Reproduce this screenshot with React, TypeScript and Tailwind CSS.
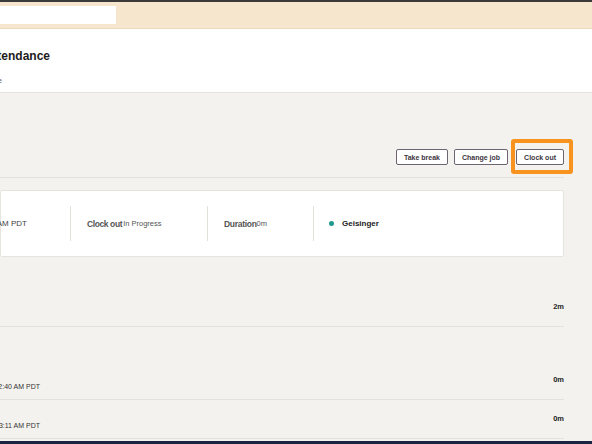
import React from "react";

// Attendance page, cropped view: clock-in card with shift actions and entry list

interface Entry {
  time: string;
  duration: string;
  height: string;
}

const entries: Entry[] = [
  { time: "", duration: "2m", height: "h-[70px]" },
  { time: "12:40 AM PDT", duration: "0m", height: "h-[73px]" },
  { time: "10:03:11 AM PDT", duration: "0m", height: "h-[39px]" },
];

function ActionButton({ label }: { label: string }) {
  return (
    <button className="h-[16px] px-[7px] border border-[#6f6572] rounded-[2px] bg-white text-[7px] font-bold leading-none text-[#3d3540] whitespace-nowrap">
      {label}
    </button>
  );
}

export default function App() {
  return (
    <div
      className="w-full h-[444px] overflow-hidden bg-[#f3f2ee] flex flex-col"
      style={{ fontFamily: '"Liberation Sans", Arial, sans-serif' }}
    >
      {/* Top edge */}
      <div className="h-[2px] bg-[#3b3b3b] shrink-0" />

      {/* Banner */}
      <div className="h-[27px] shrink-0 bg-[#f5e6cd] border-b border-[#eadbbf]">
        <div className="mt-[4px] h-[18px] w-[116px] bg-white" />
      </div>

      {/* Page header */}
      <div className="h-[64px] shrink-0 bg-white border-b border-[#e4e2dd]">
        <div className="pt-[19px] w-[50px] flex justify-end">
          <h1 className="text-[12px] leading-[16px] font-bold text-[#1c1c1c] whitespace-nowrap">
            Attendance
          </h1>
        </div>
        <div className="mt-[13px] w-[2px] flex justify-end">
          <span className="text-[7px] leading-[8px] text-[#555] whitespace-nowrap">Home</span>
        </div>
      </div>

      {/* Main */}
      <div className="pr-[28px] shrink-0">
        <div className="h-[85px] pt-[56px] border-b border-[#e4e2dd] flex justify-end items-start">
          <ActionButton label="Take break" />
          <div className="ml-[6px] flex">
            <ActionButton label="Change job" />
          </div>
          <div className="ml-[8px] relative flex">
            <ActionButton label="Clock out" />
            <span className="absolute left-[-5px] right-[-9px] top-[-10px] bottom-[-9px] border-[4px] border-[#f7931e] rounded-[3px] pointer-events-none" />
          </div>
        </div>

        {/* Current shift card */}
        <div className="mt-[12px] h-[67px] bg-white border border-[#e6e4df] rounded-[2px] flex items-center">
          <div className="w-[69px] shrink-0">
            <div className="w-[26px] flex justify-end">
              <span className="text-[8px] leading-[10px] text-[#444] whitespace-nowrap">9:52 AM PDT</span>
            </div>
          </div>
          <div className="w-[137px] shrink-0 h-[35px] border-l border-[#e2e0db] pl-[16px] flex items-center">
            <span className="text-[8.5px] leading-[10px] font-bold text-[#555] tracking-[-0.4px]">Clock out</span>
            <span className="text-[7.5px] leading-[10px] text-[#555] ml-[1px]">In Progress</span>
          </div>
          <div className="w-[106px] shrink-0 h-[35px] border-l border-[#e2e0db] pl-[16px] flex items-center">
            <span className="text-[8.5px] leading-[10px] font-bold text-[#555] tracking-[-0.3px]">Duration</span>
            <span className="text-[7.5px] leading-[10px] text-[#555]">0m</span>
          </div>
          <div className="h-[35px] border-l border-[#e2e0db] pl-[15px] flex items-center gap-[8px]">
            <span className="w-[5px] h-[5px] rounded-full bg-[#1f9a8c]" />
            <span className="text-[8px] leading-[10px] font-bold text-[#222]">Geisinger</span>
          </div>
        </div>

        {/* Entries */}
        {entries.map((entry, i) => (
          <div
            key={i}
            className={`${entry.height} border-b border-[#e4e2dd] flex items-end justify-between`}
          >
            <div className="w-[40px] flex justify-end pb-[8px]">
              <span className="text-[7px] leading-[8px] text-[#333] whitespace-nowrap">{entry.time}</span>
            </div>
            <span className="pb-[15px] text-[7.5px] leading-[8px] font-bold text-[#222]">
              {entry.duration}
            </span>
          </div>
        ))}
      </div>

      <div className="flex-1" />
      <div className="h-[3px] shrink-0 bg-[#1b2440]" />
    </div>
  );
}
